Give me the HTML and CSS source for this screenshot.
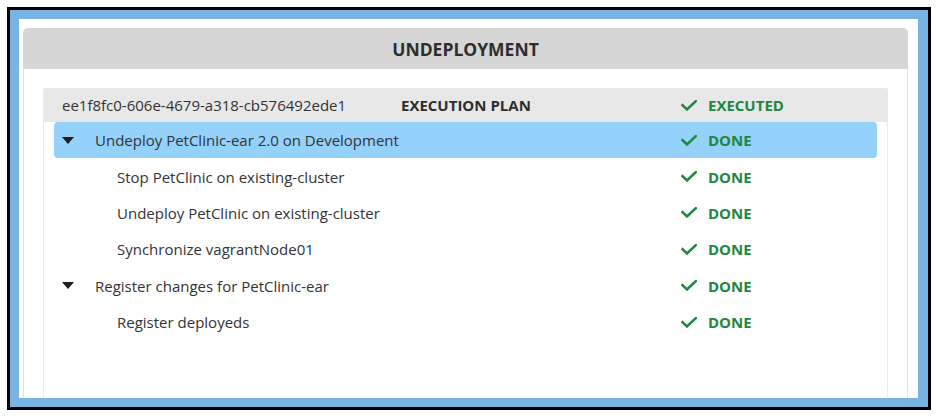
FILE: index.html
```html
<!DOCTYPE html>
<html>
<head>
<meta charset="utf-8">
<link rel="stylesheet" href="styles.css">
</head>
<body>
<div class="frame">
  <div class="frame-inner">
    <div class="panel">
      <div class="panel-header">UNDEPLOYMENT</div>
      <div class="panel-body">
        <div class="plan">
          <div class="plan-head">
            <div class="row head-row">
              <span class="plan-id">ee1f8fc0-606e-4679-a318-cb576492ede1</span>
              <span class="plan-title">EXECUTION PLAN</span>
              <span class="status"><svg class="check" viewBox="0 0 16 11"><path d="M1.5 5.2 L6 9.4 L14.8 1.2"/></svg>EXECUTED</span>
            </div>
          </div>
          <div class="row step selected">
            <span class="name top"><span class="caret"></span>Undeploy PetClinic-ear 2.0 on Development</span>
            <span class="status"><svg class="check" viewBox="0 0 16 11"><path d="M1.5 5.2 L6 9.4 L14.8 1.2"/></svg>DONE</span>
          </div>
          <div class="row step">
            <span class="name child">Stop PetClinic on existing-cluster</span>
            <span class="status"><svg class="check" viewBox="0 0 16 11"><path d="M1.5 5.2 L6 9.4 L14.8 1.2"/></svg>DONE</span>
          </div>
          <div class="row step">
            <span class="name child">Undeploy PetClinic on existing-cluster</span>
            <span class="status"><svg class="check" viewBox="0 0 16 11"><path d="M1.5 5.2 L6 9.4 L14.8 1.2"/></svg>DONE</span>
          </div>
          <div class="row step">
            <span class="name child">Synchronize vagrantNode01</span>
            <span class="status"><svg class="check" viewBox="0 0 16 11"><path d="M1.5 5.2 L6 9.4 L14.8 1.2"/></svg>DONE</span>
          </div>
          <div class="row step">
            <span class="name top"><span class="caret"></span>Register changes for PetClinic-ear</span>
            <span class="status"><svg class="check" viewBox="0 0 16 11"><path d="M1.5 5.2 L6 9.4 L14.8 1.2"/></svg>DONE</span>
          </div>
          <div class="row step">
            <span class="name child">Register deployeds</span>
            <span class="status"><svg class="check" viewBox="0 0 16 11"><path d="M1.5 5.2 L6 9.4 L14.8 1.2"/></svg>DONE</span>
          </div>
        </div>
      </div>
    </div>
  </div>
</div>
</body>
</html>
```
FILE: styles.css
```css
html, body {
  margin: 0;
  padding: 0;
  background: #ffffff;
  overflow: hidden;
}
body {
  font-family: "Open Sans", "DejaVu Sans", sans-serif;
  color: #333333;
  padding: 7px 5px 0 7px;
  height: 416px;
  box-sizing: border-box;
}
.frame {
  border: 3px solid #000000;
  height: 403px;
  box-sizing: border-box;
}
.frame-inner {
  border: 9px solid #79b3e1;
  border-right-width: 10px;
  height: 100%;
  box-sizing: border-box;
  background: #ffffff;
  padding: 9px 10px 0 4px;
  overflow: hidden;
}
.panel {
  height: 100%;
  display: flex;
  flex-direction: column;
}
.panel-header {
  background: #d6d6d6;
  border-radius: 5px 5px 0 0;
  height: 41px;
  display: flex;
  align-items: center;
  justify-content: center;
  font-weight: 700;
  font-size: 17.5px;
  color: #2e2e2e;
  flex: none;
}
.panel-body {
  flex: 1;
  border-left: 1px solid #e4e4e4;
  border-right: 1px solid #e4e4e4;
  padding: 19px 19px 0 19px;
  display: flex;
  flex-direction: column;
}
.plan {
  flex: 1;
  border-left: 1px solid #ebebeb;
  border-right: 1px solid #ebebeb;
  font-size: 15px;
}
.plan-head {
  background: #e8e8e8;
  border-radius: 4px 4px 0 0;
  margin: 0 -1px;
  padding: 0 11px;
  height: 34px;
}
.row {
  display: grid;
  grid-template-columns: 627px 1fr;
  align-items: center;
  position: relative;
}
.head-row {
  height: 34px;
  grid-template-columns: 8px 339px 280px 1fr;
}
.plan-id {
  grid-column: 2;
}
.plan-title {
  font-weight: 700;
  color: #2e2e2e;
}
.step {
  height: 36.4px;
  margin: 0 10px;
}
.selected {
  background: #94d1fb;
  border-radius: 4px;
}
.name {
  display: flex;
  align-items: center;
  white-space: nowrap;
}
.name.top {
  padding-left: 8px;
}
.name.child {
  padding-left: 63px;
}
.caret {
  width: 0;
  height: 0;
  border-left: 6px solid transparent;
  border-right: 6px solid transparent;
  border-top: 7px solid #1e1e1e;
  margin-right: 21px;
}
.status {
  display: flex;
  align-items: center;
  color: #1f8740;
  font-weight: 700;
}
.check {
  width: 16px;
  height: 11px;
  margin-right: 11px;
  fill: none;
  stroke: #1f8740;
  stroke-width: 2.6;
  stroke-linecap: square;
}
```
